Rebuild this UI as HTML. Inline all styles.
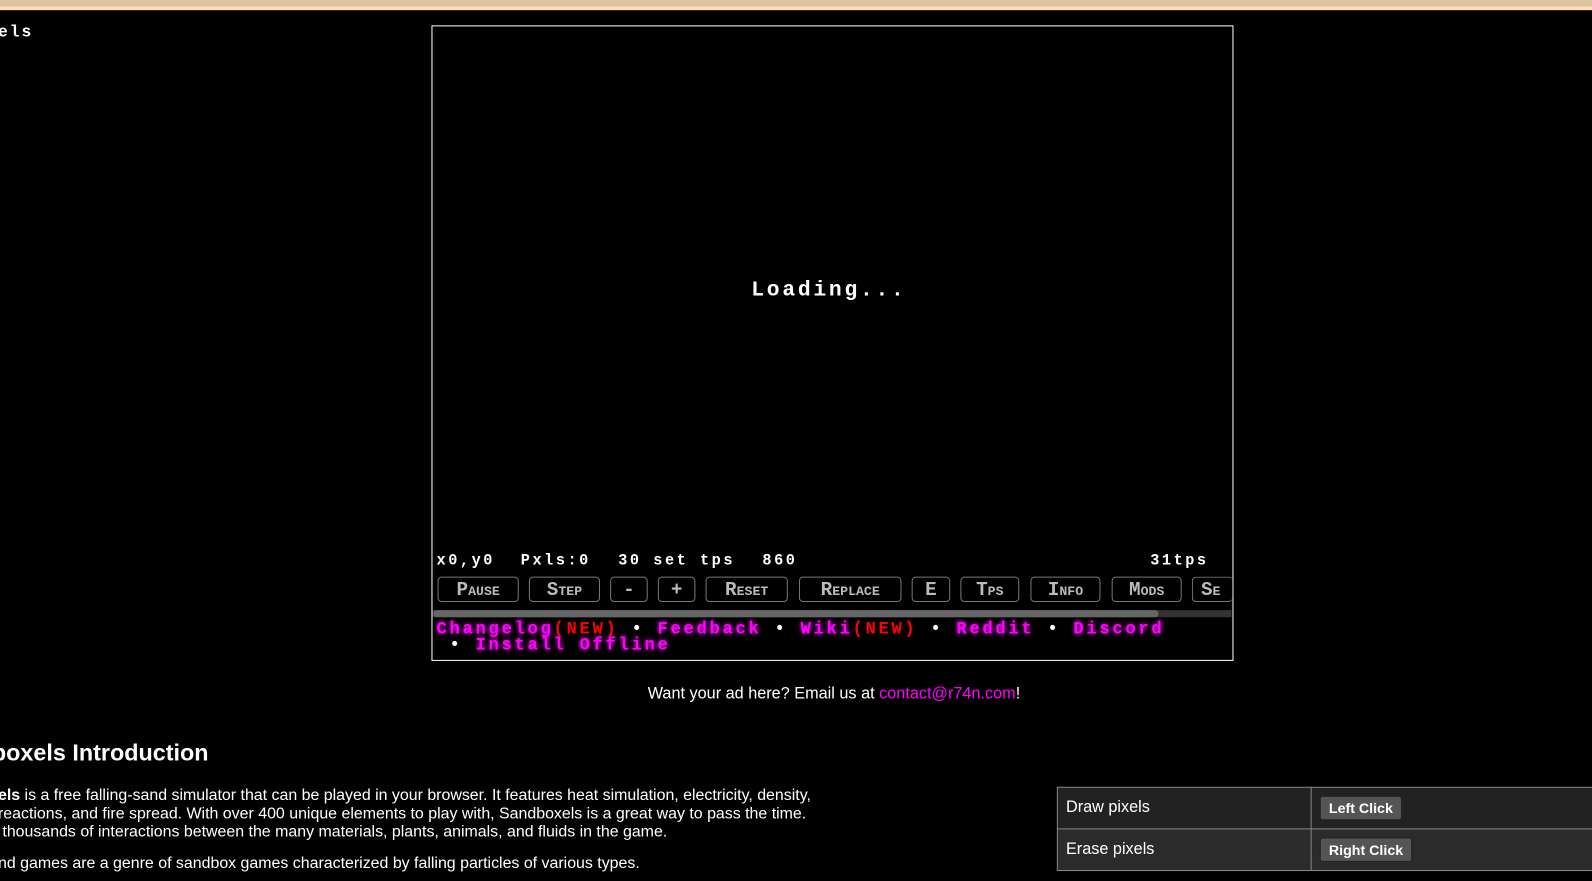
<!DOCTYPE html>
<html><head><meta charset="utf-8"><style>
body{margin:0;background:#000;width:1592px;height:868px;overflow:hidden;position:relative;font-family:"Liberation Sans",sans-serif;color:#fff}
#w{position:absolute;left:0;top:0;width:1592px;height:868px;transform:scale(1.0152);transform-origin:0 0}
.a{position:absolute;white-space:nowrap}
.px{font-family:"Liberation Mono",monospace;font-weight:bold}
.st{font-size:15px;letter-spacing:2.5px;top:544px}
.btn{position:absolute;top:568px;height:25px;border:1px solid #777;border-radius:4px;background:#000;color:#bbb;font-family:"Liberation Mono",monospace;font-weight:bold;font-size:19px;font-variant:small-caps;line-height:24px;text-align:center;box-sizing:border-box;overflow:hidden}
.m{color:#f0f;text-shadow:0 0 4px #f0f}
.r{color:#f00}
td{border:1px solid #888;height:40px;font-size:16px;padding:0 8px}
.k{display:inline-block;background:#555;border:1px solid #222;border-radius:3px;font-weight:bold;font-size:14px;padding:3px 8px;color:#fff}
</style></head><body><div id="w">
<div class="a" style="left:0;top:0;width:1620px;height:6px;background:#dcc4a0"></div>
<div class="a" style="left:0;top:6px;width:1620px;height:4px;background:#ffe0b0"></div>
<div class="a px" style="left:-2px;top:23px;font-size:16px;letter-spacing:2px">els</div>
<div class="a" style="left:425px;top:25px;width:788px;height:624px;border:1px solid #fff"></div>
<div class="a px" style="left:740px;top:275px;font-size:21px;letter-spacing:2.7px">Loading...</div>
<div class="a px st" style="left:430px">x0,y0</div>
<div class="a px st" style="left:513px">Pxls:0</div>
<div class="a px st" style="left:609px">30 set tps</div>
<div class="a px st" style="left:751px">860</div>
<div class="a px st" style="left:1133px">31tps</div>
<div class="btn" style="left:431px;width:80px">Pause</div>
<div class="btn" style="left:521px;width:70px">Step</div>
<div class="btn" style="left:601px;width:37px">-</div>
<div class="btn" style="left:648px;width:37px">+</div>
<div class="btn" style="left:695px;width:81px">Reset</div>
<div class="btn" style="left:787px;width:101px">Replace</div>
<div class="btn" style="left:898px;width:38px">E</div>
<div class="btn" style="left:946px;width:58px">Tps</div>
<div class="btn" style="left:1015px;width:69px">Info</div>
<div class="btn" style="left:1095px;width:69px">Mods</div>
<div class="btn" style="left:1174px;width:40px;border-right:none;text-align:left;padding-left:8px">Se</div>
<div class="a" style="left:426px;top:601px;width:787px;height:7px;background:#333"></div>
<div class="a" style="left:427px;top:601px;width:714px;height:7px;background:#666;border-radius:3px"></div>
<div class="a px" style="left:430px;top:613px;font-size:17px;line-height:16px;letter-spacing:2.6px"><span class="m">Changelog</span><span class="r">(NEW)</span> • <span class="m">Feedback</span> • <span class="m">Wiki</span><span class="r">(NEW)</span> • <span class="m">Reddit</span> • <span class="m">Discord</span><br>&nbsp;• <span class="m">Install Offline</span></div>
<div class="a" style="left:638px;top:675px;font-size:16px">Want your ad here? Email us at <span style="color:#f0f">contact@r74n.com</span>!</div>
<div class="a" style="left:-8px;top:728px;font-size:23px;font-weight:bold">boxels Introduction</div>
<div class="a" style="left:-2px;top:775px;font-size:15.7px;line-height:18px"><b>els</b> is a free falling-sand simulator that can be played in your browser. It features heat simulation, electricity, density,<br>reactions, and fire spread. With over 400 unique elements to play with, Sandboxels is a great way to pass the time.<br>&nbsp;thousands of interactions between the many materials, plants, animals, and fluids in the game.</div>
<div class="a" style="left:-2px;top:842px;font-size:15.7px">nd games are a genre of sandbox games characterized by falling particles of various types.</div>
<table class="a" style="left:1041px;top:775px;border-collapse:collapse;width:560px">
<tr style="background:#222"><td style="width:233px">Draw pixels</td><td><span class="k">Left Click</span></td></tr>
<tr style="background:#2b2b2b"><td>Erase pixels</td><td><span class="k">Right Click</span></td></tr>
</table>
</div></body></html>
